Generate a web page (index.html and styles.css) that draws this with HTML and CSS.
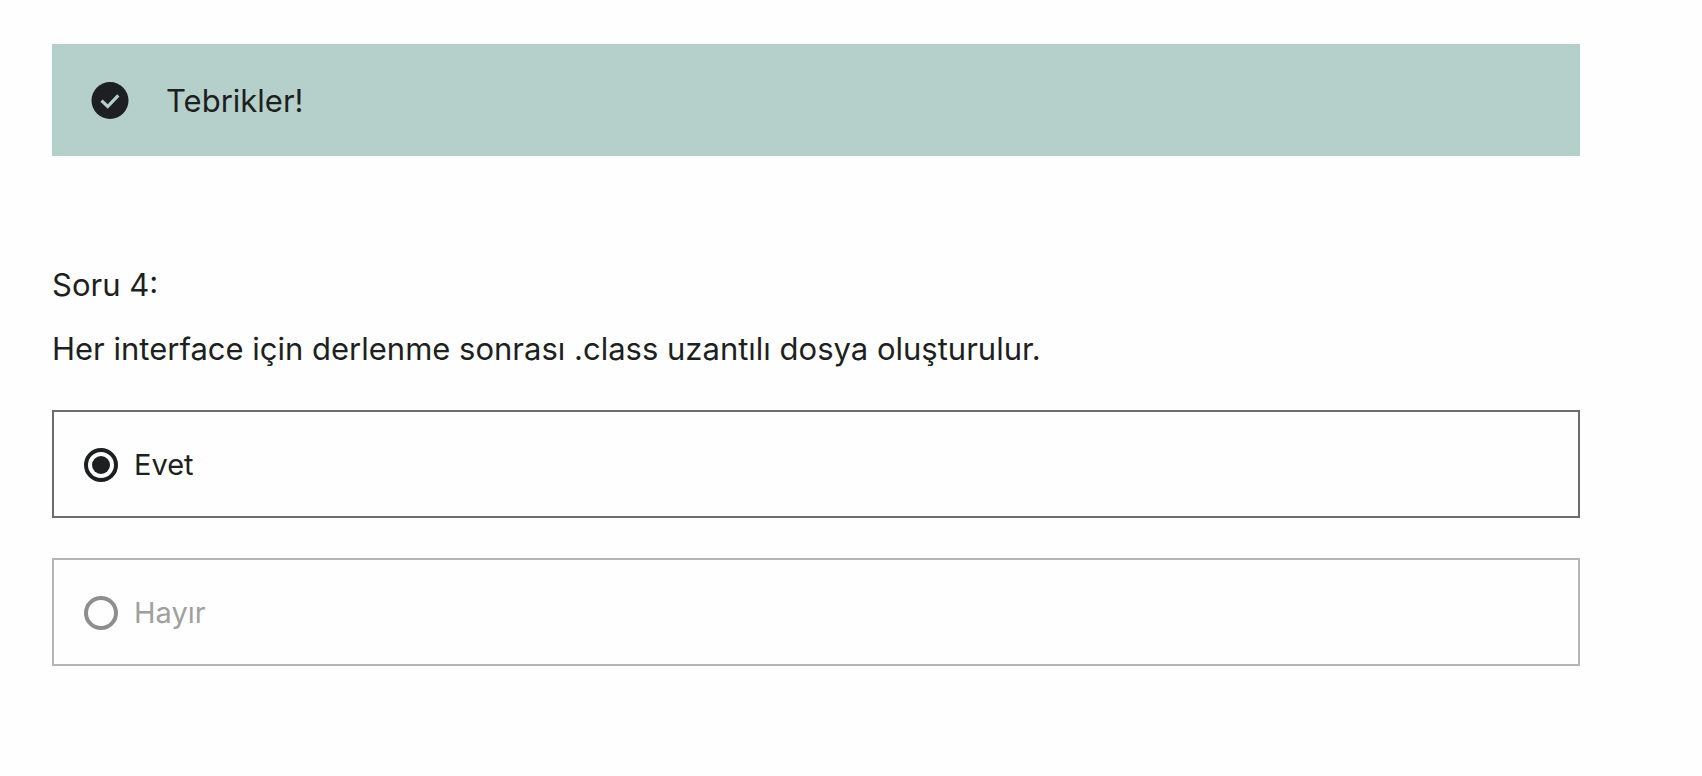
FILE: index.html
```html
<!DOCTYPE html>
<html lang="tr">
<head>
<meta charset="utf-8">
<title>Soru 4</title>
<link rel="stylesheet" href="styles.css">
</head>
<body>
<main class="quiz">
  <div class="alert" role="status">
    <svg class="alert-icon" viewBox="0 0 38 38" aria-hidden="true">
      <circle cx="19" cy="18.500" r="18.500" fill="#1d1f20"/>
      <path d="M10.500 18.700L16.700 24.500L27.300 13.300" fill="none" stroke="#b5d0cb" stroke-width="3.200"/>
    </svg>
    <p class="alert-text">Tebrikler!</p>
  </div>
  <form class="question">
    <p class="text">Soru 4:</p>
    <p class="text" id="question-text">Her interface için derlenme sonrası .class uzantılı dosya oluşturulur.</p>
    <div class="options" role="radiogroup" aria-labelledby="question-text">
      <label class="option">
        <input class="radio" type="radio" name="answer" value="evet" checked>
        <span>Evet</span>
      </label>
      <label class="option option-disabled">
        <input class="radio" type="radio" name="answer" value="hayir" disabled>
        <span>Hayır</span>
      </label>
    </div>
  </form>
</main>
</body>
</html>
```

FILE: styles.css
```css
* {
  box-sizing: border-box;
}

body {
  margin: 0;
  background: #fefefe;
  color: #1d1f20;
  font-family: Inter, "Liberation Sans", sans-serif;
  font-size: 31px;
  line-height: 48px;
}

p {
  margin: 0;
}

.quiz {
  padding: 44px 122px 44px 52px;
}

.alert {
  display: flex;
  align-items: center;
  gap: 37px;
  padding: 33px 39px 31px;
  background: #b5d0cb;
}

.alert-icon {
  flex: none;
  width: 38px;
  height: 38px;
}

.question {
  display: flex;
  flex-direction: column;
  gap: 16px;
  margin-top: 105px;
}

.options {
  display: flex;
  flex-direction: column;
  gap: 40px;
  margin-top: 21px;
}

.option {
  display: flex;
  align-items: center;
  gap: 16px;
  padding: 29px 30px 27px;
  border: 2px solid #6a6c70;
  font-size: 29px;
}

.option-disabled {
  border-color: #b5b5b5;
  color: #a0a0a0;
}

.radio {
  appearance: none;
  flex: none;
  display: grid;
  place-items: center;
  width: 34px;
  height: 34px;
  margin: 0;
  border: 4px solid #1d1f20;
  border-radius: 50%;
}

.radio:checked::before {
  content: "";
  width: 18px;
  height: 18px;
  border-radius: 50%;
  background: #1d1f20;
}

.radio:disabled {
  border-color: #8e8e8e;
}
```
